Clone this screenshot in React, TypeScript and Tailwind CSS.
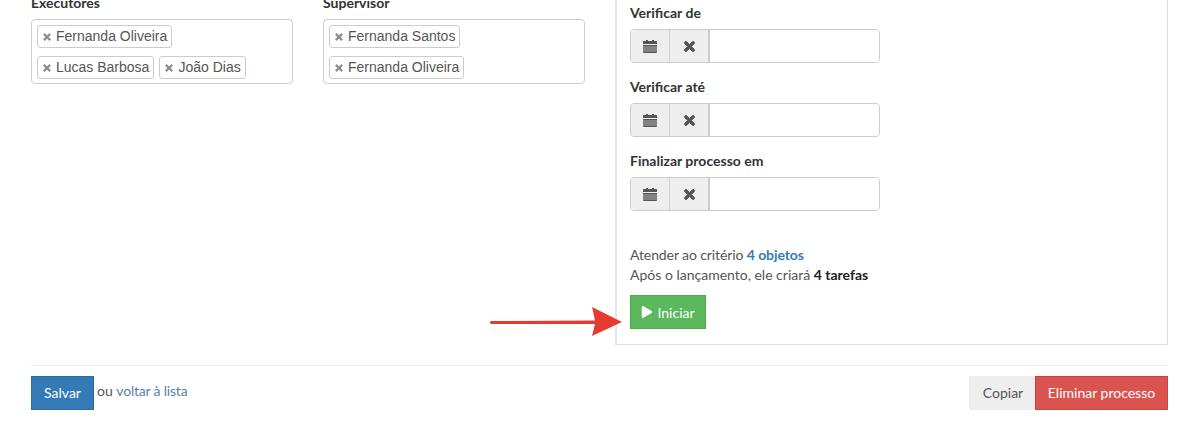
import { FaPlay, FaTimes } from "react-icons/fa";

const font = "font-['Lato','Open_Sans',sans-serif]";

function CalendarIcon() {
    return (
        <svg width="14" height="13" viewBox="0 0 14 13" fill="#555">
            <rect x="3" y="0" width="2" height="2" />
            <rect x="9" y="0" width="2" height="2" />
            <rect x="0" y="1" width="14" height="3" rx="0.5" />
            <path d="M0 5h14v7a1 1 0 0 1-1 1H1a1 1 0 0 1-1-1z" />
            <path d="M0 7h14M0 9h14M0 11h14" stroke="#eee" strokeWidth="0.6" />
        </svg>
    );
}

function Tag({ children }: { children: string }) {
    return (
        <span className="inline-flex h-[23px] items-center rounded-[3px] border border-[#ccc] bg-white pl-[4px] pr-[4px] font-['Liberation_Sans',sans-serif] text-[14px] text-[#555]">
            <FaTimes className="mr-[4px] size-[10px] stroke-[30] text-[#888]" />
            {children}
        </span>
    );
}

function PeopleField({ label, rows }: { label: string; rows: string[][] }) {
    return (
        <div className="w-[262px]">
            <label className="mb-[6px] block h-[20px] text-[14px] leading-[20px] font-bold text-[#333]">{label}</label>
            <div className="flex h-[65px] flex-col gap-[8px] rounded-[4px] border border-[#ccc] px-[5px] pt-[5px]">
                {rows.map((row) => (
                    <div key={row.join()} className="flex gap-[5px]">
                        {row.map((name) => (
                            <Tag key={name}>{name}</Tag>
                        ))}
                    </div>
                ))}
            </div>
        </div>
    );
}

function DateField({ label }: { label: string }) {
    return (
        <div className="mb-[14px]">
            <label className="mb-[6px] block h-[20px] text-[14px] leading-[20px] font-bold text-[#333]">{label}</label>
            <div className="flex h-[34px] w-[250px] overflow-hidden rounded-[4px] border border-[#ccc]">
                <span className="flex w-[39px] items-center justify-center border-r border-[#ccc] bg-[#eee]">
                    <CalendarIcon />
                </span>
                <span className="flex w-[40px] items-center justify-center border-r-2 border-[#ccc] bg-[#eee]">
                    <FaTimes className="size-[15px] stroke-[30] text-[#555]" />
                </span>
                <input className="min-w-0 flex-1 bg-white outline-none" />
            </div>
        </div>
    );
}

export default function App() {
    return (
        <div className={`${font} h-[436px] overflow-hidden bg-white px-[31px] text-[14px] text-[#555]`}>
            <div className="relative -mt-[40px] flex gap-[30px]">
                <div className="pt-[33px]">
                    <PeopleField label="Executores" rows={[["Fernanda Oliveira"], ["Lucas Barbosa", "João Dias"]]} />
                </div>
                <div className="pt-[33px]">
                    <PeopleField label="Supervisor" rows={[["Fernanda Santos"], ["Fernanda Oliveira"]]} />
                </div>
                <div className="h-[385px] flex-1 border-r border-b border-l-2 border-[#ddd] border-l-[#e6e6e6] pt-[43px] pl-[13px]">
                    <DateField label="Verificar de" />
                    <DateField label="Verificar até" />
                    <DateField label="Finalizar processo em" />
                    <p className="mt-[34px] leading-[20px] tracking-[-0.1px]">
                        Atender ao critério <a className="font-bold text-[#337ab7]">4 objetos</a>
                    </p>
                    <p className="leading-[20px]">
                        Após o lançamento, ele criará <b className="text-[#222]">4 tarefas</b>
                    </p>
                    <button className="mt-[10px] flex h-[34px] w-[76px] items-center justify-center gap-[4px] border border-[#4cae4c] bg-[#5cb85c] text-[14px] text-white">
                        <FaPlay className="size-[12px]" />
                        Iniciar
                    </button>
                </div>
                <svg className="absolute top-[345px] left-[458px]" width="136" height="32" viewBox="0 0 136 32">
                    <path d="M2 16 L106 15.5 L103 2 L133 17 L103 31 L106 19 L2 19 Q0 17.5 2 16 Z" fill="#e53a2e" />
                </svg>
            </div>
            <div className="mt-[20px] flex border-t border-[#eee] pt-[10px]">
                <button className="h-[34px] w-[63px] border border-[#2e6da4] bg-[#337ab7] pb-[2px] text-white">Salvar</button>
                <span className="ml-[3px] leading-[30px]">
                    ou <a className="tracking-[-0.2px] text-[#5a7fa8]">voltar à lista</a>
                </span>
                <div className="ml-auto flex">
                    <button className="h-[34px] w-[66px] bg-[#eee] pb-[2px] pl-[2px] text-[#555]">Copiar</button>
                    <button className="h-[34px] w-[133px] border border-[#d43f3a] bg-[#d9534f] pb-[2px] text-white">Eliminar processo</button>
                </div>
            </div>
        </div>
    );
}
